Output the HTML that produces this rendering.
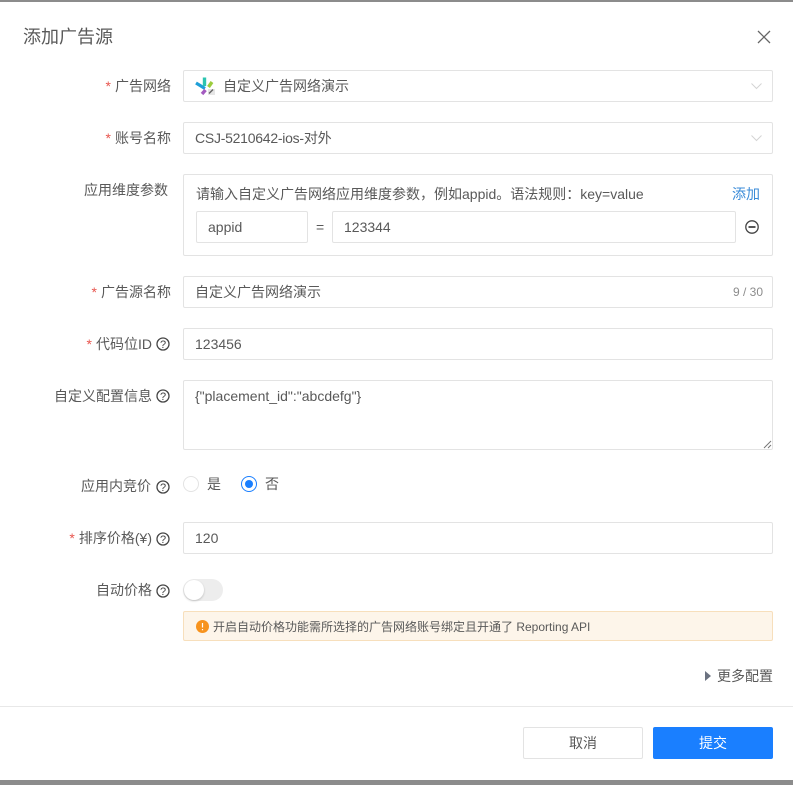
<!DOCTYPE html>
<html lang="zh-CN"><head><meta charset="utf-8"><title>添加广告源</title>
<style>
*{box-sizing:border-box}
html,body{margin:0;padding:0}
body{width:793px;height:785px;position:relative;overflow:hidden;background:#fff;font-family:"Liberation Sans","Noto Sans CJK SC",sans-serif;font-size:14px;color:#595959}
.a{position:absolute;white-space:nowrap}
.box{position:absolute;border:1px solid #e3e3e3;border-radius:2px;background:#fff}
.t{position:absolute;white-space:nowrap;line-height:20px;height:20px;color:#595959}
.l{position:absolute;white-space:nowrap;line-height:20px;height:20px;text-align:right;color:#595959}
.l i{font-style:normal;color:#e8554e;margin-right:4px}
svg{position:absolute;display:block}
</style></head><body>
<div class="a" style="left:0;top:0;width:793px;height:2px;background:#8c8c8c"></div>
<div class="a" style="left:0;top:780px;width:793px;height:5px;background:#8c8c8c"></div>
<div class="t" style="left:23px;top:24px;font-size:18px;line-height:26px;height:26px">添加广告源</div>
<svg style="left:757px;top:30px" width="14" height="14" viewBox="0 0 14 14"><path d="M1 1L13 13M13 1L1 13" stroke="#666" stroke-width="1.300" fill="none"/></svg>

<div class="l" style="right:622px;top:76px"><i>*</i>广告网络</div>
<div class="box" style="left:183px;top:70px;width:590px;height:32px"></div>
<svg style="left:194px;top:76px" width="22" height="20" viewBox="0 0 22 20"><path d="M2 7L11 12.500" stroke="#1f9fd8" stroke-width="3.200"/><path d="M10.500 1.500V10" stroke="#2cc4b0" stroke-width="3.400"/><path d="M18 6L14.500 11" stroke="#9ccc3c" stroke-width="3.400"/><path d="M8 18L11.500 14" stroke="#a45bc0" stroke-width="3.400"/><rect x="14" y="13" width="7" height="6" fill="#e6e6e6"/><path d="M15 17.500L19 13.500" stroke="#666" stroke-width="1.500"/></svg>
<div class="t" style="left:223px;top:76px">自定义广告网络演示</div>
<svg style="left:751px;top:83px" width="11" height="7" viewBox="0 0 11 7"><path d="M.5.500L5.500 5.500L10.500.500" stroke="#d4d4d4" stroke-width="1" fill="none"/></svg>

<div class="l" style="right:622px;top:128px"><i>*</i>账号名称</div>
<div class="box" style="left:183px;top:122px;width:590px;height:32px"></div>
<div class="t" style="left:195px;top:128px;letter-spacing:-.25px">CSJ-5210642-ios-对外</div>
<svg style="left:751px;top:135px" width="11" height="7" viewBox="0 0 11 7"><path d="M.5.500L5.500 5.500L10.500.500" stroke="#d4d4d4" stroke-width="1" fill="none"/></svg>

<div class="l" style="right:625px;top:180px">应用维度参数</div>
<div class="box" style="left:183px;top:174px;width:590px;height:82px"></div>
<div class="t" style="left:196px;top:184px">请输入自定义广告网络应用维度参数，例如appid。语法规则：key=value</div>
<div class="t" style="left:732px;top:184px;color:#3a8bd8">添加</div>
<div class="box" style="left:196px;top:211px;width:112px;height:32px"></div>
<div class="t" style="left:208px;top:217px">appid</div>
<div class="t" style="left:316px;top:217px">=</div>
<div class="box" style="left:332px;top:211px;width:404px;height:32px"></div>
<div class="t" style="left:344px;top:217px">123344</div>
<svg style="left:745px;top:220px" width="14" height="14" viewBox="0 0 14 14"><circle cx="7" cy="7" r="6.200" stroke="#444" stroke-width="1.300" fill="none"/><path d="M3.500 7H10.500" stroke="#444" stroke-width="1.800"/></svg>

<div class="l" style="right:622px;top:282px"><i>*</i>广告源名称</div>
<div class="box" style="left:183px;top:276px;width:590px;height:32px"></div>
<div class="t" style="left:195px;top:282px">自定义广告网络演示</div>
<div class="t" style="right:30px;top:282px;font-size:12px;color:#8c8c8c">9 / 30</div>

<div class="l" style="right:641px;top:334px"><i>*</i>代码位ID</div>
<svg style="left:156px;top:337px" width="14" height="14" viewBox="0 0 14 14"><circle cx="7" cy="7" r="6" stroke="#444" stroke-width="1.300" fill="none"/><text x="7" y="11" font-size="11" text-anchor="middle" fill="#444" font-family="Liberation Sans">?</text></svg>
<div class="box" style="left:183px;top:328px;width:590px;height:32px"></div>
<div class="t" style="left:195px;top:334px">123456</div>

<div class="l" style="right:641px;top:386px">自定义配置信息</div>
<svg style="left:156px;top:389px" width="14" height="14" viewBox="0 0 14 14"><circle cx="7" cy="7" r="6" stroke="#444" stroke-width="1.300" fill="none"/><text x="7" y="11" font-size="11" text-anchor="middle" fill="#444" font-family="Liberation Sans">?</text></svg>
<div class="box" style="left:183px;top:380px;width:590px;height:70px"></div>
<div class="t" style="left:195px;top:386px">{"placement_id":"abcdefg"}</div>
<svg style="left:763px;top:440px" width="9" height="9" viewBox="0 0 9 9"><path d="M1 8L8 1M5 8L8 5" stroke="#777" stroke-width="1" fill="none"/></svg>

<div class="l" style="right:642px;top:476px">应用内竞价</div>
<svg style="left:156px;top:480px" width="14" height="14" viewBox="0 0 14 14"><circle cx="7" cy="7" r="6" stroke="#444" stroke-width="1.300" fill="none"/><text x="7" y="11" font-size="11" text-anchor="middle" fill="#444" font-family="Liberation Sans">?</text></svg>
<svg style="left:183px;top:476px" width="16" height="16" viewBox="0 0 16 16"><circle cx="8" cy="8" r="7.500" stroke="#e3e3e3" fill="#fff"/></svg>
<div class="t" style="left:207px;top:474px">是</div>
<svg style="left:241px;top:476px" width="16" height="16" viewBox="0 0 16 16"><circle cx="8" cy="8" r="7.500" stroke="#1a7fff" fill="#fff"/><circle cx="8" cy="8" r="4" fill="#1a7fff"/></svg>
<div class="t" style="left:265px;top:474px">否</div>

<div class="l" style="right:641px;top:528px"><i>*</i>排序价格(¥)</div>
<svg style="left:156px;top:532px" width="14" height="14" viewBox="0 0 14 14"><circle cx="7" cy="7" r="6" stroke="#444" stroke-width="1.300" fill="none"/><text x="7" y="11" font-size="11" text-anchor="middle" fill="#444" font-family="Liberation Sans">?</text></svg>
<div class="box" style="left:183px;top:522px;width:590px;height:32px"></div>
<div class="t" style="left:195px;top:528px">120</div>

<div class="l" style="right:641px;top:580px">自动价格</div>
<svg style="left:156px;top:584px" width="14" height="14" viewBox="0 0 14 14"><circle cx="7" cy="7" r="6" stroke="#444" stroke-width="1.300" fill="none"/><text x="7" y="11" font-size="11" text-anchor="middle" fill="#444" font-family="Liberation Sans">?</text></svg>
<div class="a" style="left:183px;top:579px;width:40px;height:22px;border-radius:11px;background:#ededed"></div>
<div class="a" style="left:184px;top:580px;width:20px;height:20px;border-radius:50%;background:#fff;box-shadow:0 1px 2px rgba(0,0,0,.2)"></div>
<div class="box" style="left:183px;top:611px;width:590px;height:30px;background:#fdf5ea;border-color:#f7dfbc"></div>
<svg style="left:196px;top:620px" width="13" height="13" viewBox="0 0 13 13"><circle cx="6.500" cy="6.500" r="6.500" fill="#f7931e"/><path d="M6.500 3V7.500M6.500 9V10.200" stroke="#fff" stroke-width="1.200"/></svg>
<div class="t" style="left:213px;top:617px;font-size:12px">开启自动价格功能需所选择的广告网络账号绑定且开通了 Reporting API</div>

<svg style="left:705px;top:671px" width="6" height="10" viewBox="0 0 6 10"><path d="M0 0L6 5L0 10Z" fill="#6b7280"/></svg>
<div class="t" style="left:717px;top:666px">更多配置</div>
<div class="a" style="left:0;top:706px;width:793px;height:1px;background:#e8e8e8"></div>
<div class="box" style="left:523px;top:727px;width:120px;height:32px;text-align:center;line-height:30px">取消</div>
<div class="a" style="left:653px;top:727px;width:120px;height:32px;background:#1a7fff;color:#fff;text-align:center;line-height:32px;border-radius:2px">提交</div>
</body></html>
